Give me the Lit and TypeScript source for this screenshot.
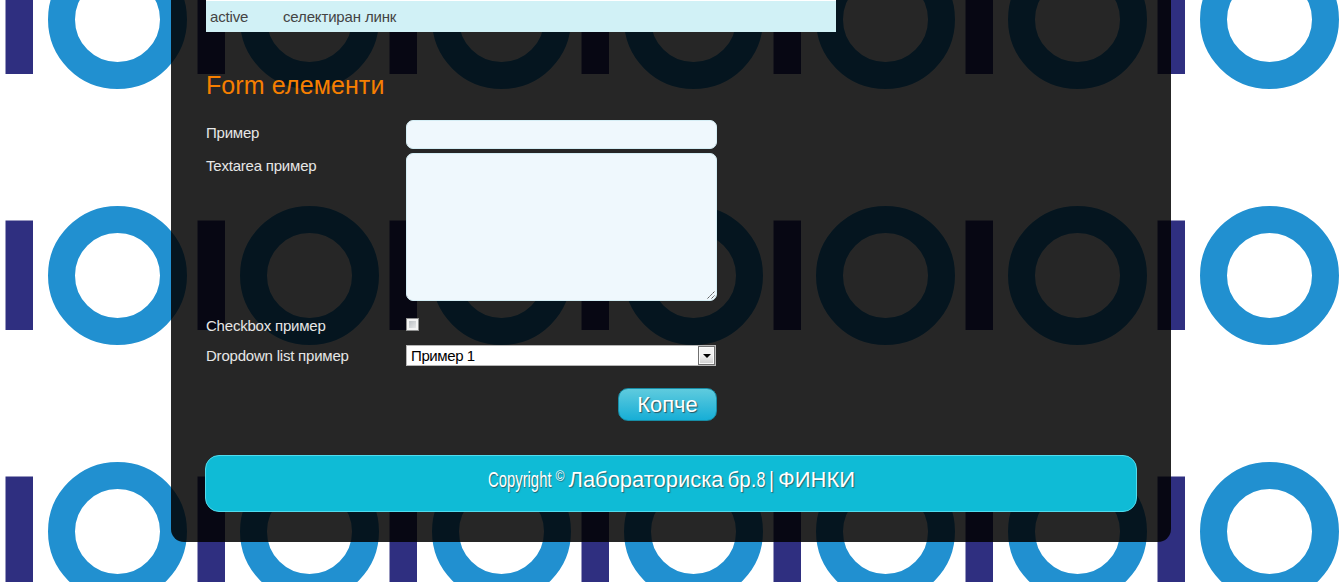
import { LitElement, html, css, svg } from "lit";
import { customElement } from "lit/decorators.js";

// Footer runs: text, x, baseline, width, font size. Latin runs are condensed by their width.
const RUNS: [string, number, number, number, number][] = [
  ["Copyright", 0, 24, 63.5, 21.5],
  ["©", 67.5, 18, 9, 14],
  ["Лабораториска", 80.5, 24, 155, 22],
  ["бр.", 239.5, 24, 29, 22],
  ["8", 268.5, 24, 9, 21.5],
  ["|", 281, 24, 5, 21.5],
  ["ФИНКИ", 290, 24, 77, 22],
];

@customElement("app-root")
export class AppRoot extends LitElement {
  static styles = css`
    :host {
      display: block;
      position: relative;
      height: 582px;
      overflow: hidden;
      font: 15px/20px "Liberation Sans", Arial, sans-serif;
      letter-spacing: -0.21px;
      color: #e6e6e6;
      background: #fff;
    }
    .bars {
      display: block;
      position: absolute;
      inset: 0;
      width: 1342px;
      height: 582px;
    }
    .panel {
      position: relative;
      box-sizing: border-box;
      width: 1000px;
      height: 542px;
      margin-left: 171px;
      padding: 0 34px 0 35px;
      border-radius: 0 0 13px 13px;
      background: rgba(0, 0, 0, 0.85);
      display: flex;
      flex-direction: column;
    }
    .row {
      box-sizing: border-box;
      width: 630px;
      height: 32px;
      border-top: 1px solid #fff;
      background: #d1f1f6;
      color: #444;
      letter-spacing: -0.15px;
      display: grid;
      grid-template-columns: 73px 1fr;
      padding: 6px 4px 0;
      flex: none;
    }
    h2 {
      margin: 38px 0 0;
      height: 30px;
      font-size: 25px;
      line-height: 30px;
      font-weight: 400;
      color: #f77f00;
      letter-spacing: 0.1px;
    }
    form {
      margin-top: 20px;
      display: grid;
      grid-template-columns: 200px 311px;
      grid-template-rows: 33px 161px 31px 43px 33px;
      height: 301px;
    }
    label {
      padding-top: 3px;
    }
    .check-label {
      padding-top: 2px;
    }
    .select-label {
      padding-top: 1px;
    }
    .input,
    .area {
      box-sizing: border-box;
      display: block;
      width: 311px;
      height: 29px;
      margin: 0;
      border: 1px solid #d5eef5;
      border-radius: 7px;
      background: #eff8fd;
      outline: none;
    }
    .area {
      height: 148px;
      resize: none;
    }
    .area-wrap {
      display: grid;
      height: 148px;
    }
    .area-wrap > * {
      grid-area: 1 / 1;
    }
    .grip {
      align-self: end;
      justify-self: end;
      margin: 0 1px 1px 0;
    }
    .check {
      box-sizing: border-box;
      width: 13px;
      height: 13px;
      margin-top: 4px;
      border: 1px solid #8e8f8f;
      background: linear-gradient(135deg, #b0b5ba, #f3f3f3);
      box-shadow: inset 0 0 0 2px #f4f4f4;
    }
    .select {
      box-sizing: border-box;
      width: 310px;
      height: 21px;
      border: 1px solid #b5b5b5;
      background: #fff;
      color: #000;
      letter-spacing: -0.4px;
      display: flex;
      justify-content: space-between;
      padding-left: 4px;
      line-height: 20px;
    }
    .arrow {
      box-sizing: border-box;
      width: 17px;
      height: 19px;
      border: 1px solid #707070;
      box-shadow: inset 0 0 0 1px #fafafa;
      background: linear-gradient(#f2f2f2 45%, #cfcfcf);
      display: flex;
      align-items: center;
      justify-content: center;
    }
    .button {
      grid-column: 2;
      justify-self: end;
      box-sizing: border-box;
      width: 99px;
      height: 33px;
      padding: 0;
      border: 1px solid #178da6;
      border-radius: 10px;
      background: linear-gradient(#5fcbde, #17aed6);
      color: #fff;
      font: 22px/30px "Liberation Sans", Arial, sans-serif;
      text-shadow: 1px 1px 1px #2a5560;
    }
    .footer {
      flex: none;
      box-sizing: border-box;
      width: 932px;
      height: 57px;
      margin: 34px 0 0 -1px;
      border: 1px solid #50dbed;
      border-radius: 14px;
      background: #0fbbd6;
      display: flex;
      justify-content: center;
      padding-top: 7px;
    }
    .copy {
      display: block;
      height: 34px;
      overflow: visible;
      fill: #fff;
      letter-spacing: 0;
      text-shadow: 1px 1px 1px #2a6570;
    }
  `;

  render() {
    return html`
      <svg class="bars" aria-hidden="true">
        <defs>
          <pattern id="tile" width="192" height="256" patternUnits="userSpaceOnUse" y="-109">
            <rect x="5.5" y="73.5" width="27.5" height="109.5" fill="#2f2f80" />
            <circle cx="117.5" cy="128.5" r="56" fill="none" stroke="#2190d0" stroke-width="27" />
          </pattern>
        </defs>
        <rect width="1342" height="582" fill="url(#tile)" />
      </svg>
      <main class="panel">
        <div class="row"><span>active</span><span>селектиран линк</span></div>
        <h2>Form елементи</h2>
        <form>
          <label>Пример</label>
          <input class="input" />
          <label>Textarea пример</label>
          <div class="area-wrap">
            <textarea class="area"></textarea>
            <svg class="grip" width="9" height="9" stroke="#555" stroke-width="1">
              <path d="M0.5 7.5L7.5 0.5M4.5 7.5L7.5 4.5" stroke-dasharray="2 .6" />
            </svg>
          </div>
          <label class="check-label">Checkbox пример</label>
          <div><div class="check" role="checkbox"></div></div>
          <label class="select-label">Dropdown list пример</label>
          <div class="select">
            <span>Пример 1</span>
            <span class="arrow"><svg width="8" height="4"><path d="M0 0h8L4 4z" /></svg></span>
          </div>
          <button class="button" type="button">Копче</button>
        </form>
        <footer class="footer">
          <svg class="copy" width="367">
            ${RUNS.map(
              ([text, x, y, width, size]) => svg`<text x=${x} y=${y} font-size=${size} textLength=${width} lengthAdjust="spacingAndGlyphs">${text}</text>`,
            )}
          </svg>
        </footer>
      </main>
    `;
  }
}
